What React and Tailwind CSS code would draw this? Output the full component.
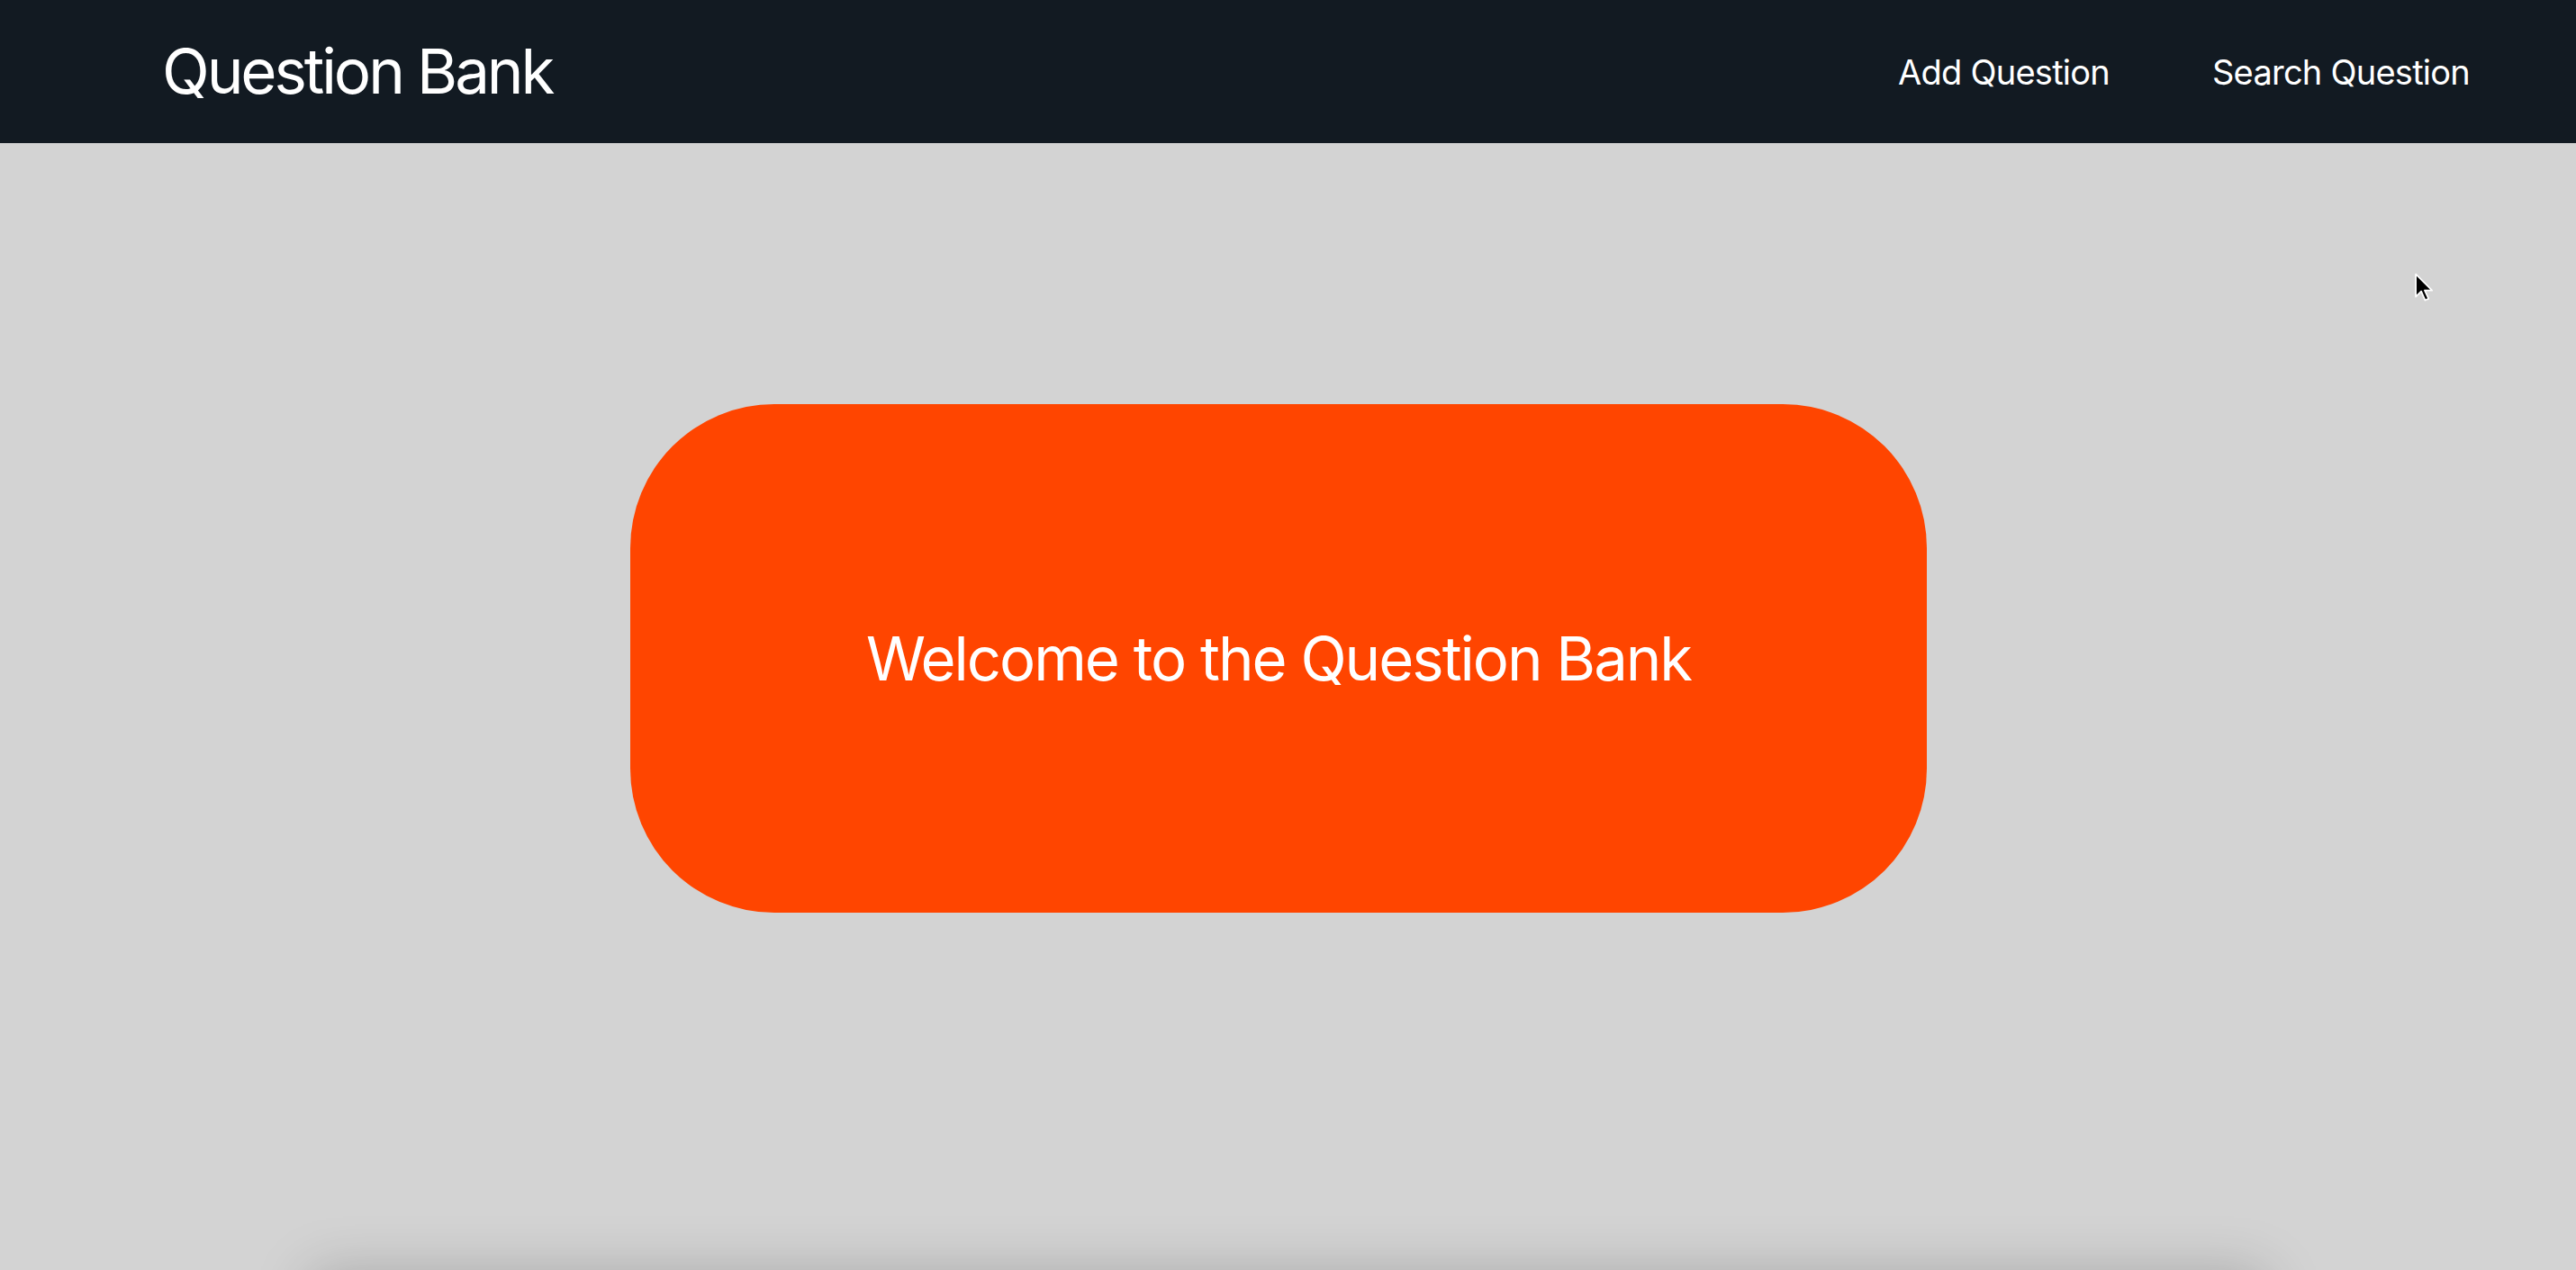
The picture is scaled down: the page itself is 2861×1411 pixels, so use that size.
import React from 'react';

const Header = () => {
    return (
        <header className="h-[159px] bg-[#121a22] flex items-center justify-between pl-[180px] pr-[118px]">
            <h1 className="text-white text-[69px] leading-none tracking-[-0.045em] font-normal">
                Question Bank
            </h1>
            <nav className="flex items-center gap-[114px] text-white text-[38px] leading-none tracking-[-0.02em]">
                <a href="#add">Add Question</a>
                <a href="#search">Search Question</a>
            </nav>
        </header>
    );
};

const App = () => {
    return (
        <div
            className="relative min-h-screen bg-[#d3d3d3] overflow-hidden"
            style={{ fontFamily: 'Inter, "Noto Sans", sans-serif' }}
        >
            <Header />

            <main className="pt-[290px] pl-[700px]">
                {/* Welcome card */}
                <div className="w-[1440px] h-[565px] rounded-[160px] bg-[#ff4500] flex items-center justify-center">
                    <h2 className="text-white text-[67px] leading-none tracking-[-0.03em] font-normal">
                        Welcome to the Question Bank
                    </h2>
                </div>
            </main>

            {/* next section, mostly below the fold */}
            <section className="mt-[402px] mx-auto w-[2170px] h-[300px] bg-[#d3d3d3] shadow-[0_0_60px_rgba(0,0,0,0.22)]" />

            {/* mouse pointer */}
            <svg
                className="absolute left-[2682px] top-[303px]"
                width="24"
                height="36"
                viewBox="0 0 22 32"
            >
                <path d="M1 1 L1 24 L6.5 18.5 L10.5 27.5 L14 26 L10 17.5 L17.5 17.5 Z" fill="#000" stroke="#fff" strokeWidth="1.6" strokeLinejoin="round" />
            </svg>
        </div>
    );
};

export default App;
